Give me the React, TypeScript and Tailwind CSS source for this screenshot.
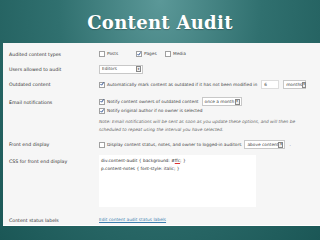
import type { ReactNode } from 'react';

const body = "font-['DejaVu_Sans',sans-serif]";

function Check({ on = false }: { on?: boolean }) {
  return (
    <span className="inline-flex h-[6px] w-[6px] shrink-0 items-center justify-center border border-[#a0a0a0] bg-white">
      {on && (
        <svg viewBox="0 0 6 6" className="h-[6px] w-[6px] -mt-[1px]">
          <path d="M0.8 3.2 L2.4 4.8 L5.6 0.6" fill="none" stroke="#2a4f8f" strokeWidth="1.5" />
        </svg>
      )}
    </span>
  );
}

function Select({ label, w }: { label: string; w: string }) {
  return (
    <span className={`inline-flex h-[9px] items-center border border-[#c8c8c8] bg-white ${w}`}>
      <span className="flex-1 pl-[2px] leading-none">{label}</span>
      <span className="mr-[1px] flex h-[6px] w-[5px] items-center justify-center border border-[#888] bg-[#eee] text-[3px] leading-none text-black">
        ▾
      </span>
    </span>
  );
}

function Row({ label, h, top, children }: { label: string; h: string; top?: boolean; children: ReactNode }) {
  return (
    <div className={`flex ${h} ${top ? 'items-start' : 'items-center'}`}>
      <div className={`w-[90px] shrink-0 text-[4.7px] text-[#333] ${top ? 'pt-[6px]' : ''}`}>{label}</div>
      <div className="flex-1">{children}</div>
    </div>
  );
}

export default function App() {
  return (
    <div className="flex h-[240px] w-[320px] flex-col overflow-hidden bg-[radial-gradient(ellipse_at_50%_0%,#5b9898_0%,#30706f_45%,#1b5756_100%)]">
      <div className="flex h-[43px] items-center justify-center pt-[1px]">
        <h1 className="font-['DejaVu_Serif',serif] text-[18px] font-bold tracking-[0.3px] text-white [text-shadow:0_1px_1px_rgba(0,0,0,0.25)]">
          Content Audit
        </h1>
      </div>

      <div className={`ml-[3px] flex h-[183px] flex-col border-b border-white bg-[#f6f6f6] pl-[6px] pt-[4px] ${body} text-[4.3px] text-[#444]`}>
        <Row label="Audited content types" h="h-[15px]">
          <div className="flex items-center">
            <Check />
            <span className="ml-[2px] w-[29px]">Posts</span>
            <Check on />
            <span className="ml-[2px] w-[21px]">Pages</span>
            <Check />
            <span className="ml-[2px]">Media</span>
          </div>
        </Row>

        <Row label="Users allowed to audit" h="h-[15px]">
          <Select label="Editors" w="w-[44px]" />
        </Row>

        <Row label="Outdated content" h="h-[16px]">
          <div className="flex items-center">
            <Check on />
            <span className="ml-[2px]">Automatically mark content as outdated if it has not been modified in</span>
            <span className="ml-[4px] flex h-[9px] w-[18px] items-center border border-[#ddd] bg-white pl-[2px]">6</span>
            <span className="ml-[4px]">
              <Select label="months" w="w-[23px]" />
            </span>
          </div>
        </Row>

        <Row label="Email notifications" h="h-[45px]" top>
          <div className="flex flex-col pt-[4px]">
            <div className="flex h-[10px] items-center">
              <Check on />
              <span className="ml-[2px]">Notify content owners of outdated content</span>
              <span className="ml-[3px]">
                <Select label="once a month" w="w-[40px]" />
              </span>
            </div>
            <div className="flex h-[9px] items-center">
              <Check on />
              <span className="ml-[2px]">Notify original author if no owner is selected</span>
            </div>
            <p className="pt-[2px] pr-[4px] text-[4.3px] italic leading-[8px] text-[#666]">
              Note: Email notifications will be sent as soon as you update these options, and will then be
              scheduled to repeat using the interval you have selected.
            </p>
          </div>
        </Row>

        <Row label="Front end display" h="h-[15px]">
          <div className="flex items-center">
            <Check />
            <span className="ml-[2px]">Display content status, notes, and owner to logged-in auditors</span>
            <span className="ml-[3px]">
              <Select label="above content" w="w-[41px]" />
            </span>
            <span className="ml-[4px]">.</span>
          </div>
        </Row>

        <Row label="CSS for front end display" h="h-[60px]" top>
          <div className="mt-[3px] h-[52px] w-[157px] bg-white px-[2px] pt-[2px] leading-[8px] text-[#333]">
            <div>
              div.content-audit {'{'} background: #<span className="underline decoration-[#d33]">ffc</span>; {'}'}
            </div>
            <div>p.content-notes {'{'} font-style: italic; {'}'}</div>
          </div>
        </Row>

        <Row label="Content status labels" h="h-[13px] pt-[3px]">
          <span className="text-[#3d7fb0] underline">Edit content audit status labels</span>
        </Row>
      </div>
    </div>
  );
}
